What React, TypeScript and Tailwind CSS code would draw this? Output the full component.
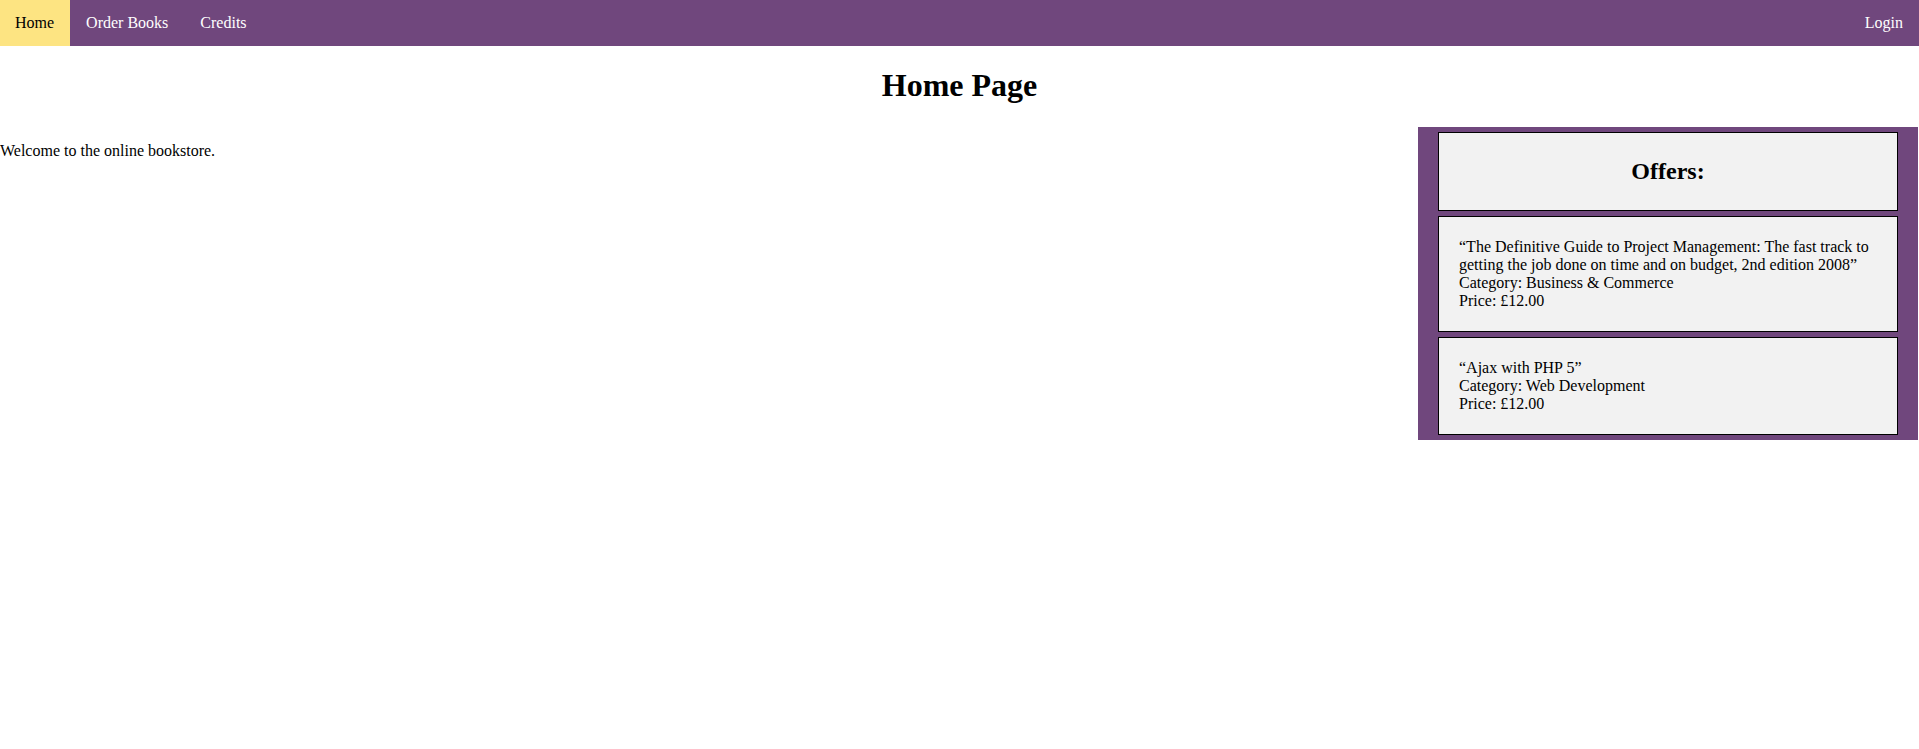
const offers = [
  {
    title: "The Definitive Guide to Project Management: The fast track to getting the job done on time and on budget, 2nd edition 2008",
    category: "Business & Commerce",
    price: "£12.00",
  },
  { title: "Ajax with PHP 5", category: "Web Development", price: "£12.00" },
];

const navLink = "px-4 py-3.5 text-white hover:bg-[#f1f1f1] hover:text-black";

export default function App() {
  return (
    <div className="bg-white font-['Liberation_Serif',serif] text-base leading-[18px] text-black">
      <nav className="flex bg-[#70477d]">
        <a href="#home" aria-current="page" className="bg-[#fde482] py-3.5 pr-4 pl-[15px] text-black">
          Home
        </a>
        <a href="#order" className={navLink}>
          Order Books
        </a>
        <a href="#credits" className={navLink}>
          Credits
        </a>
        <a href="#login" className={`${navLink} ml-auto`}>
          Login
        </a>
      </nav>
      <h1 className="pt-[21px] pb-[23px] text-center text-[32px] leading-[37px] font-bold">Home Page</h1>
      <main className="flex items-start justify-between pr-px">
        <p className="pt-[15px]">Welcome to the online bookstore.</p>
        <aside className="flex w-[500px] flex-col gap-[5px] bg-[#70477d] px-5 py-[5px]">
          <h2 className="border border-black bg-[#f2f2f2] py-[25px] text-center text-2xl leading-[27px] font-bold">
            Offers:
          </h2>
          {offers.map((offer) => (
            <section key={offer.title} className="border border-black bg-[#f2f2f2] px-5 py-[21px]">
              <p>{`“${offer.title}”`}</p>
              <p>{`Category: ${offer.category}`}</p>
              <p>{`Price: ${offer.price}`}</p>
            </section>
          ))}
        </aside>
      </main>
    </div>
  );
}
